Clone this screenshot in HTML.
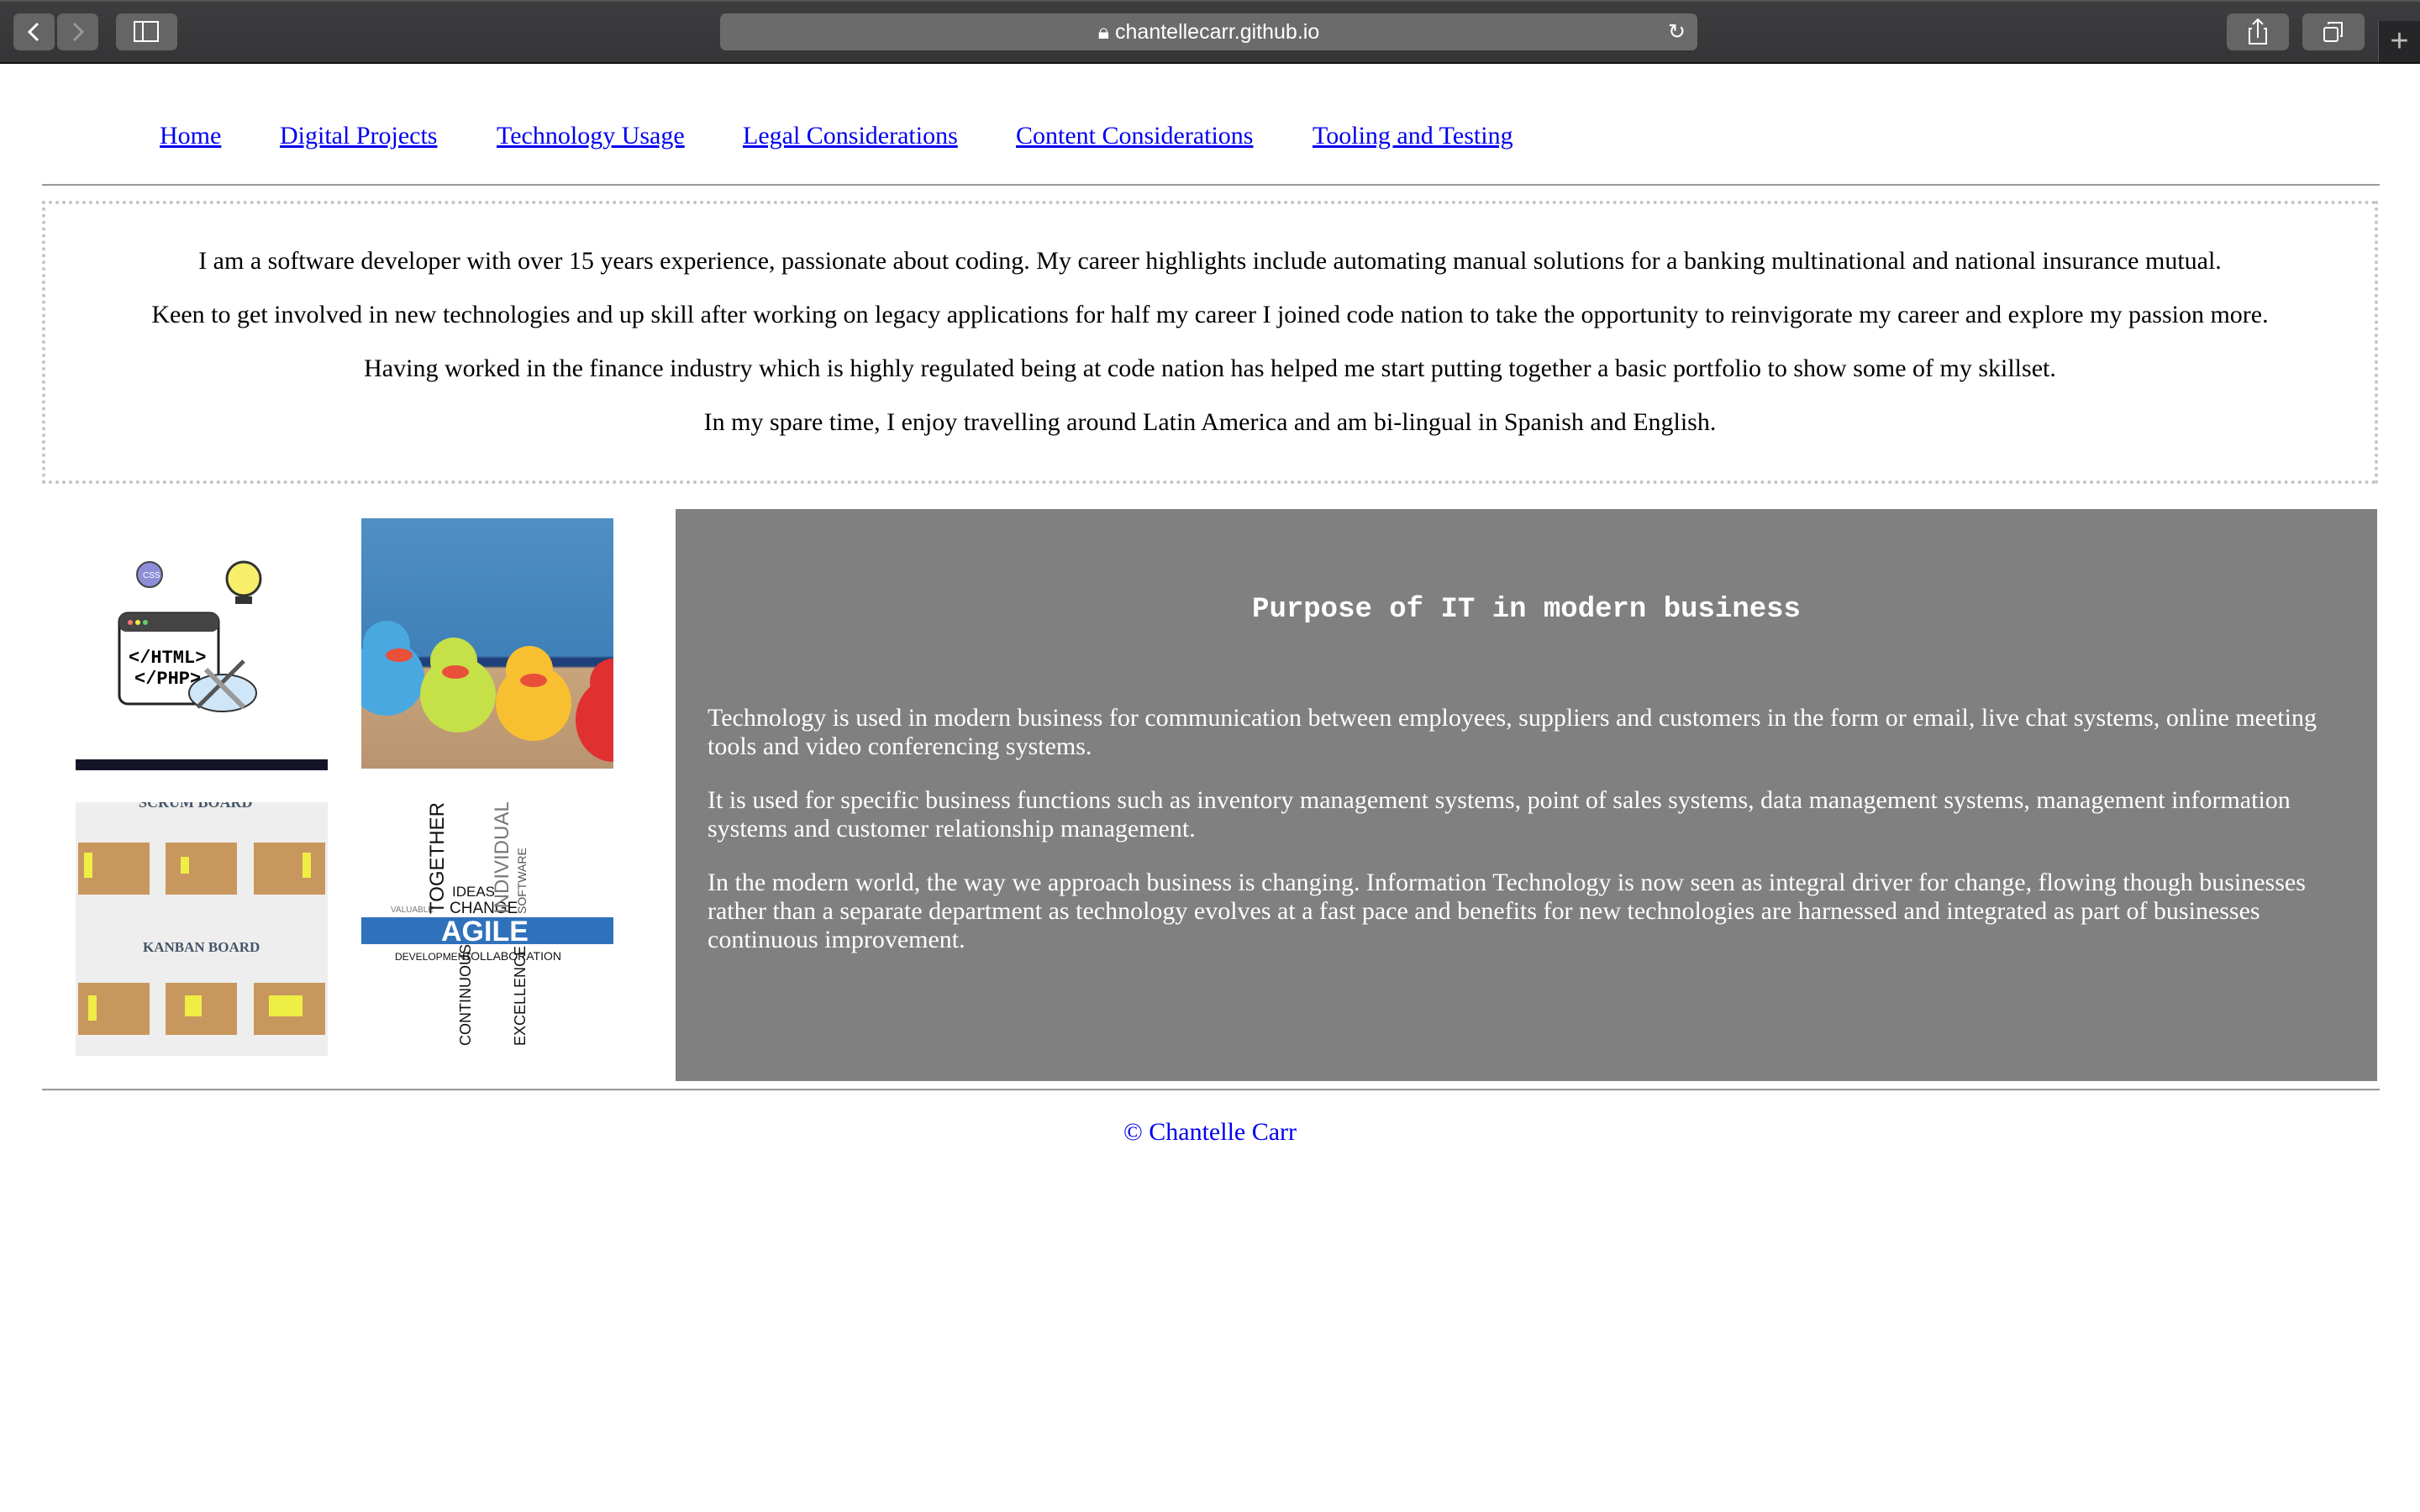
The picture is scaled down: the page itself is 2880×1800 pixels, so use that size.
<!DOCTYPE html>
<html><head><meta charset="utf-8">
<style>
*{margin:0;padding:0;box-sizing:border-box}
html,body{width:2880px;height:1800px;overflow:hidden;background:#fff;font-family:"Liberation Serif",serif}
.bar{position:absolute;left:0;top:0;width:2880px;height:74px;background:linear-gradient(#3d3d3f,#353537);border-top:2px solid #555}
.bline{position:absolute;left:0;top:74px;width:2880px;height:2px;background:#111}
.btn{position:absolute;top:16px;height:44px;background:#656565;border-radius:7px}
.url{position:absolute;left:857px;top:16px;width:1163px;height:44px;background:#6b6b6b;border-radius:7px;color:#fff;font-family:"Liberation Sans",sans-serif;font-size:25px;text-align:center;line-height:44px}
.nav{position:absolute;top:145px;font-size:30px;color:#0000ee;text-decoration:underline;white-space:nowrap}
.hr{position:absolute;left:50px;width:2782px;height:3px;background:#9a9a9a;border-bottom:1px solid #eee}
.box{position:absolute;left:50px;top:239px;width:2780px;height:337px;border:4px dotted #c4c4c4}
.box p{position:absolute;left:0;width:100%;text-align:center;font-size:30px;color:#000;white-space:nowrap}
.gray{position:absolute;left:804px;top:606px;width:2025px;height:681px;background:#808080;color:#fff}
.gp{position:absolute;left:38px;width:1950px;font-size:30px;line-height:34px}
.img{position:absolute;width:300px;height:300px;overflow:hidden}
</style></head><body>
<div class="bar"></div><div class="bline"></div>
<div class="btn" style="left:16px;width:49px"><svg width="49" height="44"><path d="M29 12 L19 22 L29 32" stroke="#fff" stroke-width="3" fill="none"/></svg></div>
<div class="btn" style="left:68px;width:49px"><svg width="49" height="44"><path d="M20 12 L30 22 L20 32" stroke="#999" stroke-width="3" fill="none"/></svg></div>
<div class="btn" style="left:138px;width:73px"><svg width="73" height="44"><rect x="22" y="10" width="28" height="23" stroke="#fff" stroke-width="2" fill="none"/><line x1="32" y1="10" x2="32" y2="33" stroke="#fff" stroke-width="2"/></svg></div>
<div class="url">&#128274;&#xFE0E; chantellecarr.github.io<span style="position:absolute;right:14px;top:0">&#8635;</span></div>
<div class="btn" style="left:2650px;width:74px"><svg width="74" height="44"><path d="M30 18 H27 V36 H47 V18 H44 M37 29 V7 M31 13 L37 7 L43 13" stroke="#fff" stroke-width="2" fill="none"/></svg></div>
<div class="btn" style="left:2740px;width:74px"><svg width="74" height="44"><rect x="26" y="17" width="16" height="16" stroke="#fff" stroke-width="2" fill="none" rx="2"/><path d="M31 13 V11 H47 V27 H45" stroke="#fff" stroke-width="2" fill="none"/></svg></div>
<div style="position:absolute;left:2830px;top:25px;width:50px;height:49px;background:#262628;border-left:1px solid #555;color:#bbb;font-size:38px;font-family:'Liberation Sans';text-align:center;line-height:49px">+</div>

<a class="nav" style="left:190px">Home</a>
<a class="nav" style="left:333px">Digital Projects</a>
<a class="nav" style="left:591px">Technology Usage</a>
<a class="nav" style="left:884px">Legal Considerations</a>
<a class="nav" style="left:1209px">Content Considerations</a>
<a class="nav" style="left:1562px">Tooling and Testing</a>
<div class="hr" style="top:219px"></div>

<div class="box">
<p style="top:51px">I am a software developer with over 15 years experience, passionate about coding. My career highlights include automating manual solutions for a banking multinational and national insurance mutual.</p>
<p style="top:115px">Keen to get involved in new technologies and up skill after working on legacy applications for half my career I joined code nation to take the opportunity to reinvigorate my career and explore my passion more.</p>
<p style="top:179px">Having worked in the finance industry which is highly regulated being at code nation has helped me start putting together a basic portfolio to show some of my skillset.</p>
<p style="top:243px">In my spare time, I enjoy travelling around Latin America and am bi-lingual in Spanish and English.</p>
</div>

<div class="img" style="left:90px;top:617px;height:300px">
<svg width="300" height="300">
<rect x="0" y="287" width="300" height="13" fill="#141428"/>
<circle cx="88" cy="67" r="15" fill="#8c8ed8" stroke="#444" stroke-width="2"/><text x="80" y="71" font-size="10" fill="#fff" font-family="Liberation Sans">CSS</text>
<circle cx="200" cy="72" r="20" fill="#f7ee6a" stroke="#333" stroke-width="3"/><rect x="190" y="93" width="20" height="9" fill="#333"/>
<rect x="52" y="113" width="118" height="108" rx="10" fill="#fff" stroke="#222" stroke-width="3"/><rect x="52" y="113" width="118" height="22" rx="8" fill="#444"/>
<circle cx="65" cy="124" r="3" fill="#f77"/><circle cx="74" cy="124" r="3" fill="#ee4"/><circle cx="83" cy="124" r="3" fill="#6c6"/>
<text x="63" y="172" font-size="22" font-weight="bold" font-family="Liberation Mono">&lt;/HTML&gt;</text>
<text x="70" y="197" font-size="22" font-weight="bold" font-family="Liberation Mono">&lt;/PHP&gt;</text>
<ellipse cx="175" cy="208" rx="40" ry="22" fill="#cfe6f8" stroke="#333" stroke-width="2"/>
<line x1="145" y1="225" x2="200" y2="170" stroke="#555" stroke-width="5"/><line x1="155" y1="180" x2="200" y2="225" stroke="#999" stroke-width="6"/>
</svg></div>
<div class="img" style="left:430px;top:617px;height:298px;background:linear-gradient(#4f8fc4,#3f80b8 55%,#1f3f78 56%,#1f3f78 59%,#c8a47c 60%,#b89470)">
<svg width="300" height="298">
<ellipse cx="30" cy="190" rx="45" ry="45" fill="#4aa8e0"/><circle cx="30" cy="150" r="28" fill="#4aa8e0"/><ellipse cx="45" cy="163" rx="16" ry="8" fill="#e8503a"/>
<ellipse cx="115" cy="210" rx="45" ry="45" fill="#c6e048"/><circle cx="110" cy="170" r="28" fill="#c6e048"/><ellipse cx="112" cy="183" rx="16" ry="8" fill="#e8503a"/>
<ellipse cx="205" cy="220" rx="45" ry="45" fill="#f8c030"/><circle cx="200" cy="180" r="28" fill="#f8c030"/><ellipse cx="205" cy="193" rx="16" ry="8" fill="#e8503a"/>
<ellipse cx="300" cy="240" rx="45" ry="50" fill="#e03030"/><circle cx="300" cy="195" r="28" fill="#e03030"/>
</svg></div>
<div class="img" style="left:90px;top:955px;height:302px;background:#eeeeee">
<svg width="300" height="302">
<text x="75" y="6" font-size="18" font-weight="bold" fill="#456" font-family="Liberation Serif">SCRUM BOARD</text>
<rect x="3" y="48" width="85" height="62" fill="#c8975e"/><rect x="107" y="48" width="85" height="62" fill="#c8975e"/><rect x="212" y="48" width="85" height="62" fill="#c8975e"/>
<text x="80" y="178" font-size="17" font-weight="bold" fill="#456" font-family="Liberation Serif">KANBAN BOARD</text>
<rect x="3" y="215" width="85" height="62" fill="#c8975e"/><rect x="107" y="215" width="85" height="62" fill="#c8975e"/><rect x="212" y="215" width="85" height="62" fill="#c8975e"/>
<rect x="10" y="60" width="10" height="30" fill="#ee4"/><rect x="125" y="65" width="10" height="20" fill="#ee4"/><rect x="270" y="60" width="10" height="30" fill="#ee4"/>
<rect x="15" y="230" width="10" height="30" fill="#ee4"/><rect x="130" y="230" width="20" height="25" fill="#ee4"/><rect x="230" y="230" width="40" height="25" fill="#ee4"/>
</svg></div>
<div class="img" style="left:430px;top:955px;height:302px;background:#fff">
<svg width="300" height="302" font-family="Liberation Sans">
<rect x="0" y="137" width="300" height="32" fill="#2f72bb"/>
<text x="95" y="165" font-size="34" font-weight="bold" fill="#fff">AGILE</text>
<text x="35" y="131" font-size="10" fill="#777">VALUABLE</text>
<text x="105" y="132" font-size="19" fill="#111">CHANGE</text>
<text x="108" y="112" font-size="17" fill="#111">IDEAS</text>
<text transform="translate(98,133) rotate(-90)" font-size="24" fill="#111">TOGETHER</text>
<text transform="translate(175,133) rotate(-90)" font-size="24" fill="#777">INDIVIDUALS</text>
<text transform="translate(196,133) rotate(-90)" font-size="14" fill="#555">SOFTWARE</text>
<text x="40" y="188" font-size="12" fill="#111">DEVELOPMENT</text>
<text x="120" y="188" font-size="14" fill="#111">COLLABORATION</text>
<text transform="translate(130,290) rotate(-90)" font-size="18" fill="#111">CONTINUOUS</text>
<text transform="translate(195,290) rotate(-90)" font-size="18" fill="#111">EXCELLENCE</text>
</svg></div>

<div class="gray">
<div style="position:absolute;top:101px;width:100%;text-align:center;font-family:'Liberation Mono',monospace;font-weight:bold;font-size:34px">Purpose of IT in modern business</div>
<div class="gp" style="top:232px">Technology is used in modern business for communication between employees, suppliers and customers in the form or email, live chat systems, online meeting tools and video conferencing systems.</div>
<div class="gp" style="top:330px">It is used for specific business functions such as inventory management systems, point of sales systems, data management systems, management information systems and customer relationship management.</div>
<div class="gp" style="top:428px">In the modern world, the way we approach business is changing. Information Technology is now seen as integral driver for change, flowing though businesses rather than a separate department as technology evolves at a fast pace and benefits for new technologies are harnessed and integrated as part of businesses continuous improvement.</div>
</div>
<div class="hr" style="top:1296px"></div>
<div style="position:absolute;top:1331px;left:0;width:2880px;text-align:center;font-size:30px;color:#0000ee">© Chantelle Carr</div>
</body></html>
